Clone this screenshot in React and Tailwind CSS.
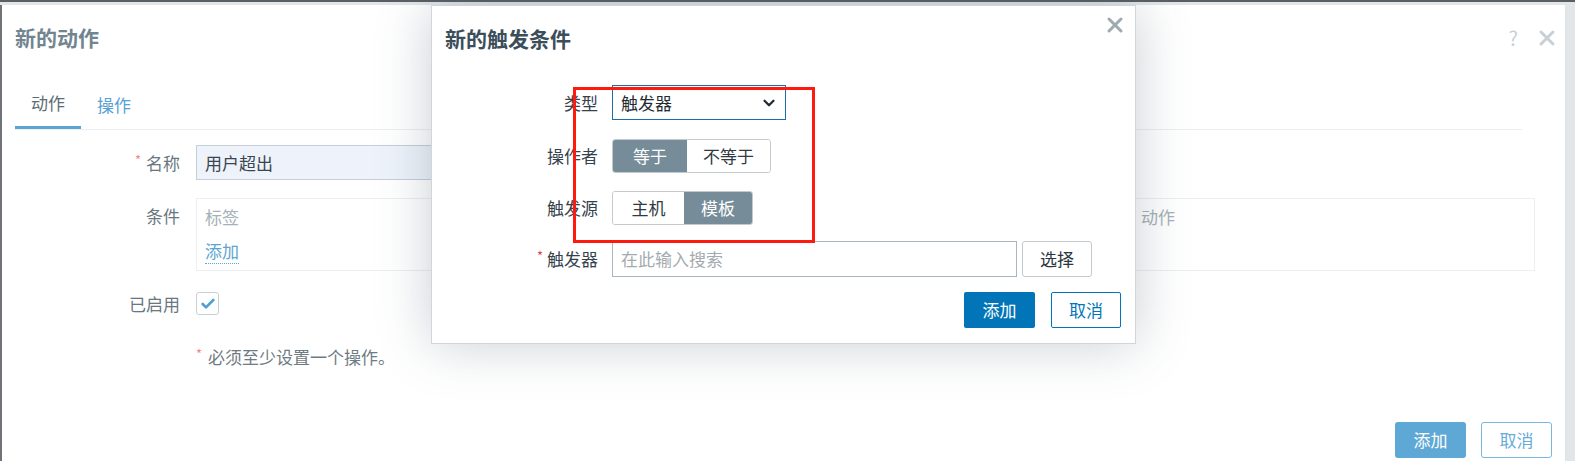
import { X, ChevronDown, Check } from 'lucide-react';

const Segmented = ({ items, active }) => (
  <div className="flex h-[34px] rounded-[3px] border border-[#c2cad0] overflow-hidden">
    {items.map((it, i) => (
      <div
        key={it.label}
        className={`flex items-center justify-center ${it.w} ${
          i === active ? 'bg-[#768c99] text-white' : 'bg-white text-[#2f3a42]'
        }`}
      >
        {it.label}
      </div>
    ))}
  </div>
);

const TriggerModal = () => (
  <div className="absolute left-[431px] top-[5px] w-[705px] h-[339px] bg-white border border-[#d0d6db] shadow-[0_0_50px_rgba(60,80,95,0.28)] text-[17px] text-[#35424c]">
    <div className="h-[66px] flex items-center px-[13px]">
      <h3 className="text-[21px] font-bold text-[#3b4e5a]">新的触发条件</h3>
    </div>
    <button className="absolute right-[8px] top-[7px] text-[#9fa9b0]">
      <X size={24} strokeWidth={3} />
    </button>

    <div className="mt-[13px] flex flex-col">
      <div className="flex items-center">
        <label className="w-[166px] text-right">类型</label>
        <div className="ml-[14px] w-[174px] h-[35px] border border-[#1c6ea6] flex items-center justify-between pl-[8px] pr-[7px] text-[#1f2a32]">
          <span>触发器</span>
          <ChevronDown size={18} strokeWidth={3} className="text-[#1f2a32]" />
        </div>
      </div>

      <div className="flex items-center mt-[19px]">
        <label className="w-[166px] text-right">操作者</label>
        <div className="ml-[14px]">
          <Segmented
            active={0}
            items={[
              { label: '等于', w: 'w-[74px]' },
              { label: '不等于', w: 'w-[83px]' },
            ]}
          />
        </div>
      </div>

      <div className="flex items-center mt-[18px]">
        <label className="w-[166px] text-right">触发源</label>
        <div className="ml-[14px]">
          <Segmented
            active={1}
            items={[
              { label: '主机', w: 'w-[71px]' },
              { label: '模板', w: 'w-[68px]' },
            ]}
          />
        </div>
      </div>

      <div className="flex items-center mt-[16px]">
        <label className="w-[166px] text-right">
          <span className="text-[#e54545] text-[13px] mr-[4px] align-top">*</span>触发器
        </label>
        <div className="ml-[14px] w-[405px] h-[36px] border border-[#aab5bd] flex items-center px-[8px] text-[#a3abb1]">
          在此输入搜索
        </div>
        <button className="ml-[5px] w-[70px] h-[36px] border border-[#c2cad0] rounded-[3px] text-[#2a3640]">
          选择
        </button>
      </div>

      <div className="flex justify-end gap-[16px] mt-[15px] pr-[14px]">
        <button className="w-[71px] h-[36px] rounded-[2px] bg-[#0275b8] text-white">添加</button>
        <button className="w-[70px] h-[36px] rounded-[2px] border border-[#0275b8] text-[#0275b8]">取消</button>
      </div>
    </div>
  </div>
);

export default function App() {
  return (
    <div className="relative w-[1575px] h-[461px] overflow-hidden bg-[#eceff1] font-['Noto_Sans_CJK_SC',sans-serif]">
      <div className="h-[2px] bg-[#5a5f63]" />
      <div className="flex h-[459px] pt-[3px] bg-[#e2e6e9]">
        <div className="w-[1566px] h-full bg-white border-l-2 border-[#707478] border-r border-r-[#dde2e6] flex flex-col text-[17px] text-[#6a7780]">
          <div className="h-[66px] flex items-center justify-between pl-[13px] pr-[6px]">
            <h3 className="text-[21px] font-bold text-[#72858f]">新的动作</h3>
            <div className="flex items-center gap-[17px] text-[#c8d0d5]">
              <span className="text-[20px] leading-none">?</span>
              <X size={24} strokeWidth={3} />
            </div>
          </div>

          <div className="ml-[13px] mr-[43px] mt-[9px] flex border-b border-[#eceff1]">
            <div className="h-[49px] px-[16px] flex items-center border-b-[3px] border-[#5aa5d4] text-[#5d6c76]">
              动作
            </div>
            <div className="h-[49px] px-[16px] flex items-center text-[#55a1d4]">操作</div>
          </div>

          <div className="mt-[15px] flex flex-col">
            <div className="flex items-center">
              <label className="w-[178px] text-right">
                <span className="text-[#f08888] text-[13px] mr-[5px] align-top">*</span>名称
              </label>
              <div className="ml-[16px] w-[480px] h-[35px] bg-[#eef3fb] border border-[#c6cfd7] flex items-center px-[8px] text-[#3a464f]">
                用户超出
              </div>
            </div>

            <div className="flex items-start mt-[18px]">
              <label className="w-[178px] text-right pt-[5px]">条件</label>
              <div className="ml-[16px] w-[1339px] h-[73px] border border-[#eceff1] px-[8px] pt-[5px]">
                <div className="flex text-[#a6b1b8]">
                  <span className="w-[936px]">标签</span>
                  <span>动作</span>
                </div>
                <div className="mt-[8px]">
                  <span className="text-[#5ea4d2] border-b border-dotted border-[#5ea4d2] leading-[24px]">添加</span>
                </div>
              </div>
            </div>

            <div className="flex items-center mt-[20px]">
              <label className="w-[178px] text-right">已启用</label>
              <div className="ml-[16px] w-[23px] h-[23px] border border-[#c8d0d6] rounded-[3px] flex items-center justify-center">
                <Check size={16} strokeWidth={4} className="text-[#519fd5]" />
              </div>
            </div>

            <div className="mt-[27px] ml-[194px] text-[#6f7b83]">
              <span className="text-[#f08888] text-[13px] mr-[6px] align-top">*</span>必须至少设置一个操作。
            </div>
          </div>

          <div className="mt-auto mb-[3px] flex justify-end gap-[15px] pr-[13px]">
            <button className="w-[71px] h-[36px] rounded-[3px] bg-[#5ea8d5] text-white">添加</button>
            <button className="w-[71px] h-[36px] rounded-[3px] border border-[#7ab7de] text-[#67acd9]">取消</button>
          </div>
        </div>
      </div>

      <TriggerModal />

      <div className="absolute left-[573px] top-[87px] w-[242px] h-[156px] border-[3px] border-[#ff1a0f]" />
    </div>
  );
}
